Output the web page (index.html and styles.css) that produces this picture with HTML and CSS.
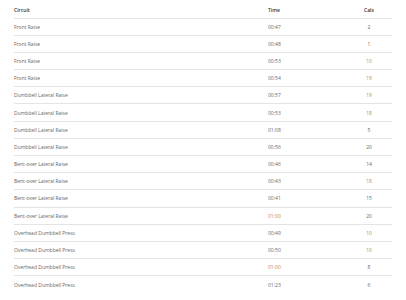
FILE: index.html
```html
<!DOCTYPE html>
<html lang="en">
<head>
  <meta charset="UTF-8">
  <title>Workout Log</title>
  <link rel="stylesheet" href="styles.css">
</head>
<body>
  <table class="log-table">
    <thead>
      <tr>
        <th class="col-circuit">Circuit</th>
        <th class="col-time">Time</th>
        <th class="col-cals">Cals</th>
      </tr>
    </thead>
    <tbody>
      <tr><td>Front Raise</td><td>00:47</td><td class="col-cals">2</td></tr>
      <tr><td>Front Raise</td><td>00:48</td><td class="col-cals">1</td></tr>
      <tr><td>Front Raise</td><td>00:53</td><td class="col-cals hot">10</td></tr>
      <tr><td>Front Raise</td><td>00:54</td><td class="col-cals hot">19</td></tr>
      <tr><td>Dumbbell Lateral Raise</td><td>00:57</td><td class="col-cals hot">19</td></tr>
      <tr><td>Dumbbell Lateral Raise</td><td>00:53</td><td class="col-cals hot">18</td></tr>
      <tr><td>Dumbbell Lateral Raise</td><td>01:08</td><td class="col-cals">5</td></tr>
      <tr><td>Dumbbell Lateral Raise</td><td>00:56</td><td class="col-cals">20</td></tr>
      <tr><td>Bent-over Lateral Raise</td><td>00:46</td><td class="col-cals">14</td></tr>
      <tr><td>Bent-over Lateral Raise</td><td>00:43</td><td class="col-cals hot">18</td></tr>
      <tr><td>Bent-over Lateral Raise</td><td>00:41</td><td class="col-cals">15</td></tr>
      <tr><td>Bent-over Lateral Raise</td><td class="hot">01:00</td><td class="col-cals">20</td></tr>
      <tr><td>Overhead Dumbbell Press</td><td>00:49</td><td class="col-cals hot">10</td></tr>
      <tr><td>Overhead Dumbbell Press</td><td>00:50</td><td class="col-cals hot">10</td></tr>
      <tr><td>Overhead Dumbbell Press</td><td class="hot">01:00</td><td class="col-cals">8</td></tr>
      <tr><td>Overhead Dumbbell Press</td><td>01:23</td><td class="col-cals">6</td></tr>
    </tbody>
  </table>
</body>
</html>
```

FILE: styles.css
```css
/* ===== Base ===== */
* {
  margin: 0;
  padding: 0;
  box-sizing: border-box;
}

body {
  background: #ffffff;
  font-family: 'Open Sans', sans-serif;
  font-size: 5px;
  color: #666666;
  padding: 0 14px;
}

/* ===== Table ===== */
.log-table {
  width: 100%;
  border-collapse: collapse;
}

.log-table th {
  height: 18px;
  text-align: left;
  font-weight: 600;
  color: #333333;
  border-bottom: 1px solid #e4e4e4;
  padding-top: 2px;
}

.log-table td {
  height: 17.2px;
  border-bottom: 1px solid #e4e4e4;
}

.log-table tbody tr:last-child td {
  border-bottom: none;
}

.col-circuit {
  width: 254px;
}

.col-time {
  width: 78px;
}

.log-table .col-cals {
  text-align: center;
}

.hot {
  color: #c7852f;
}
```
